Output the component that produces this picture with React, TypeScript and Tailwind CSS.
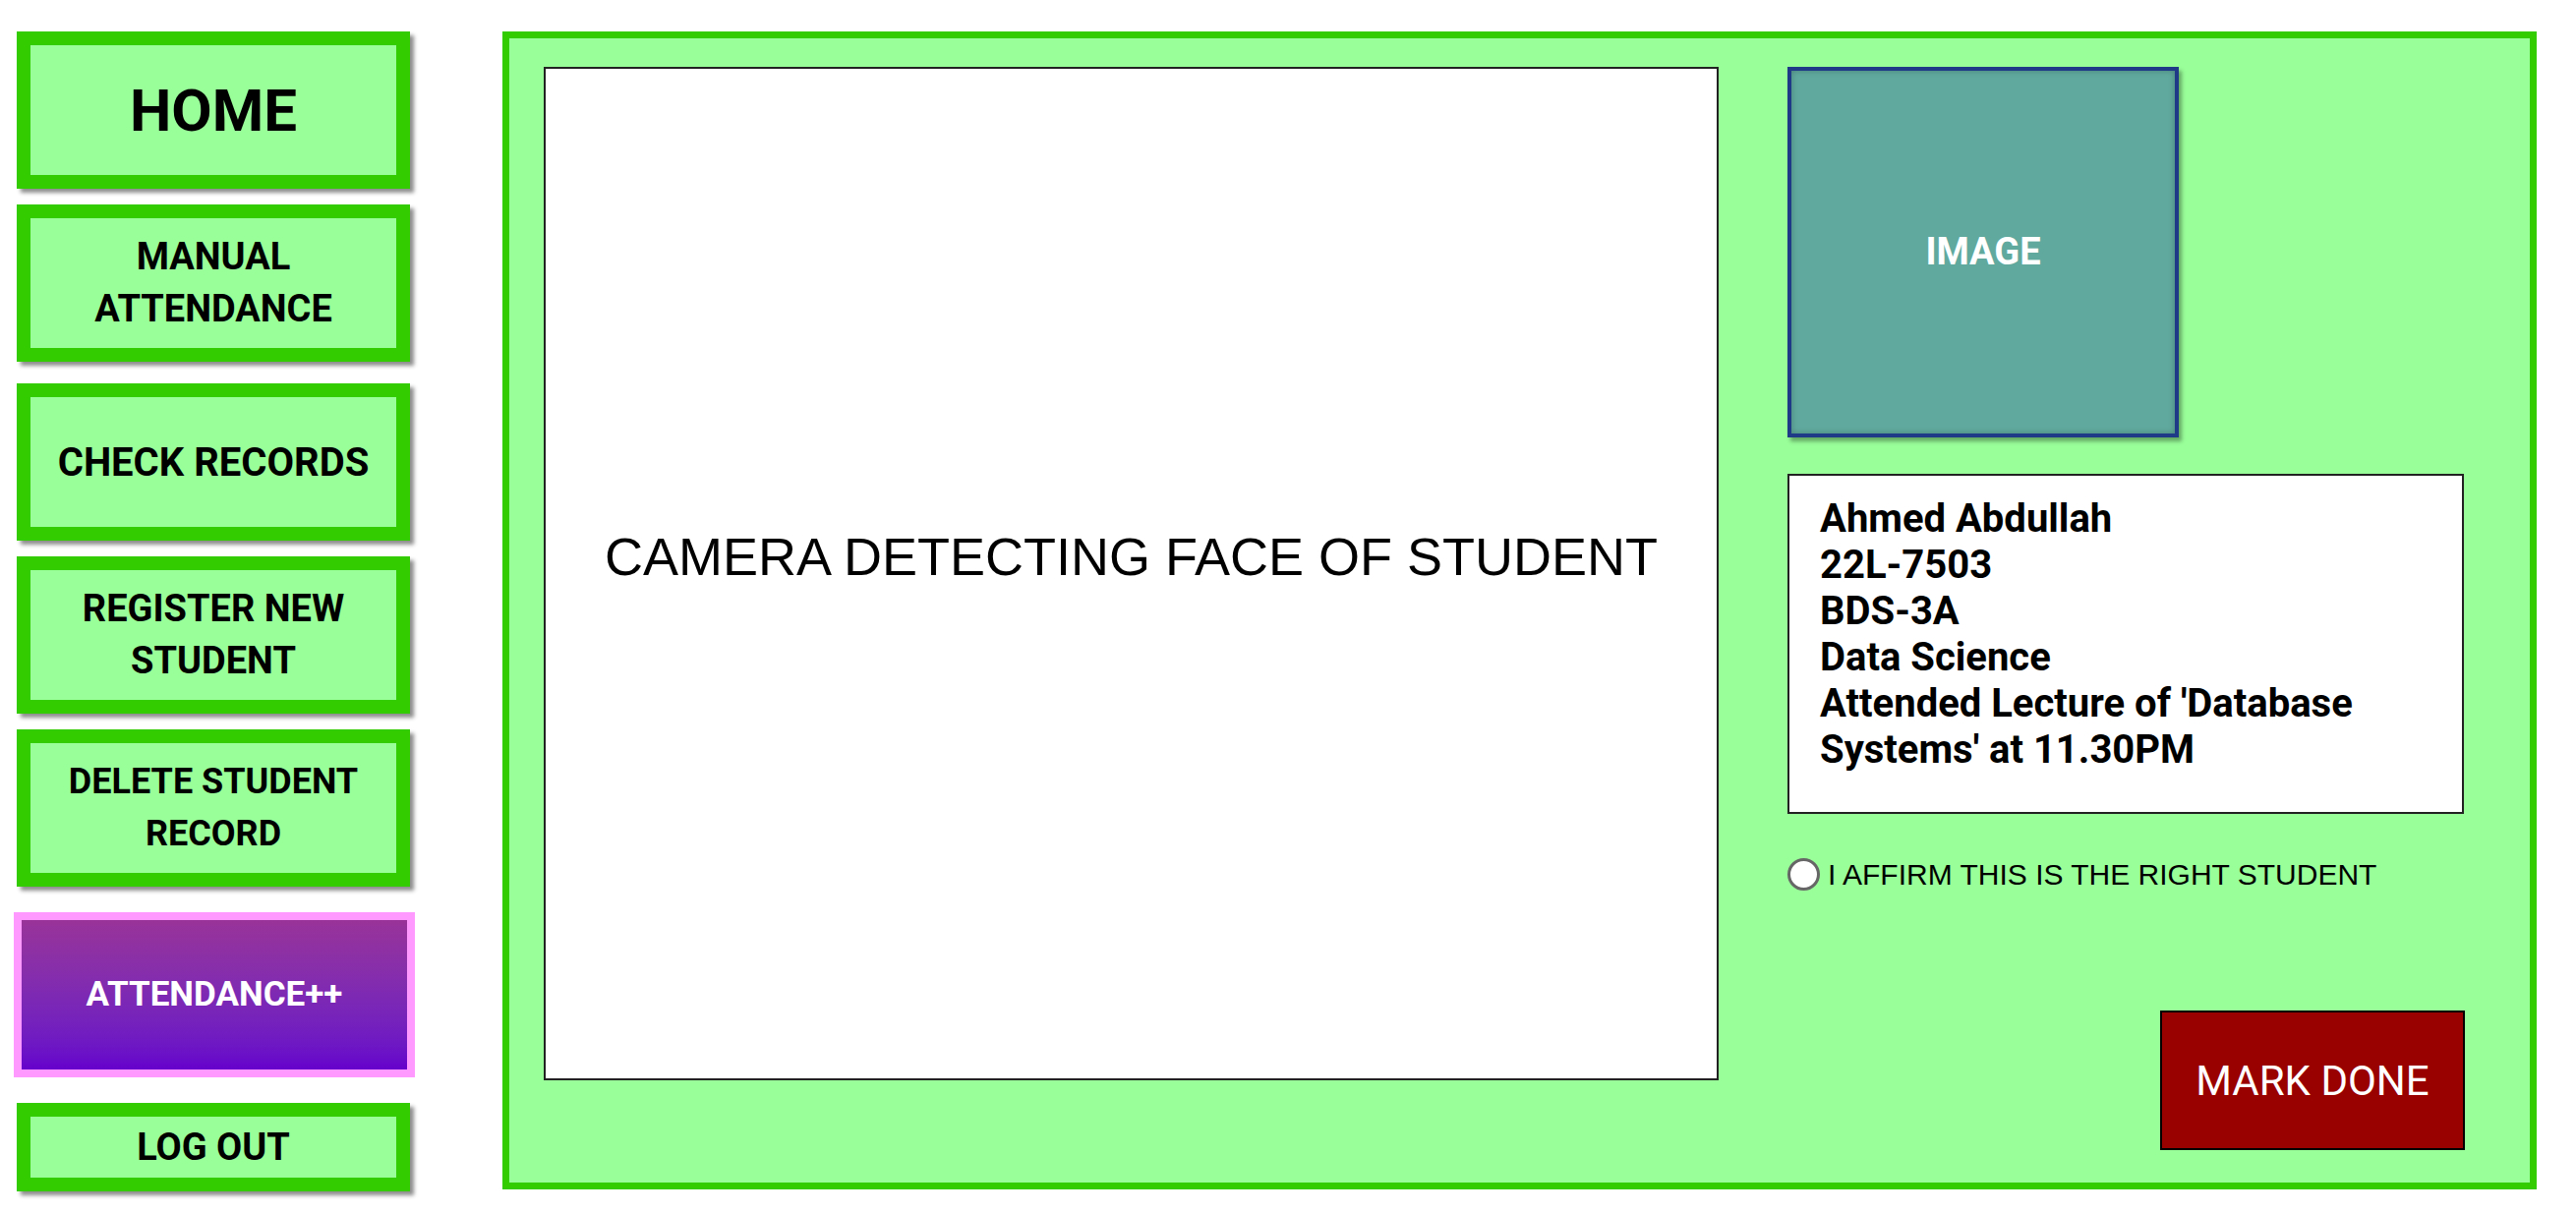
const NAV = [
  { label: ['HOME'], size: 'text-[60px]', h: 'h-[160px]', mt: 'mt-0' },
  { label: ['MANUAL', 'ATTENDANCE'], size: 'text-[38px]', h: 'h-[160px]', mt: 'mt-[16px]' },
  { label: ['CHECK RECORDS'], size: 'text-[40px]', h: 'h-[160px]', mt: 'mt-[22px]' },
  { label: ['REGISTER NEW', 'STUDENT'], size: 'text-[38px]', h: 'h-[160px]', mt: 'mt-[16px]' },
  { label: ['DELETE STUDENT', 'RECORD'], size: 'text-[36px]', h: 'h-[160px]', mt: 'mt-[16px]' },
];

function NavButton({ label, size, h, mt }: { label: string[]; size: string; h: string; mt: string }) {
  return (
    <div
      className={`flex w-[400px] flex-col items-center justify-center border-[14px] border-[#33cc00] bg-[#99ff99] text-center font-bold leading-[53px] text-black shadow-[4px_4px_4px_rgba(0,0,0,0.45)] ${size} ${h} ${mt}`}
    >
      {label.map((line) => (
        <span key={line}>{line}</span>
      ))}
    </div>
  );
}

export default function App() {
  return (
    <div className="flex h-[1234px] w-[2620px] overflow-hidden bg-white font-['Roboto',sans-serif]">
      {/* sidebar */}
      <aside className="flex w-[417px] shrink-0 flex-col pl-[17px] pt-[32px]">
        {NAV.map((item) => (
          <NavButton key={item.label.join(' ')} {...item} />
        ))}
        <div className="-ml-[3px] mt-[26px] flex h-[168px] w-[408px] items-center justify-center border-[8px] border-[#ff99ff] bg-gradient-to-b from-[#993399] to-[#6600cc] text-[35px] font-bold text-white">
          ATTENDANCE++
        </div>
        <div className="mt-[26px] flex h-[90px] w-[400px] items-center justify-center border-[14px] border-[#33cc00] bg-[#99ff99] text-[38px] font-bold text-black shadow-[4px_4px_4px_rgba(0,0,0,0.45)]">
          LOG OUT
        </div>
      </aside>

      {/* main panel */}
      <main className="ml-[94px] mt-[32px] flex h-[1178px] w-[2069px] border-[7px] border-[#33cc00] bg-[#99ff99] pl-[35px] pt-[29px]">
        <div className="flex h-[1031px] w-[1195px] items-center justify-center border-2 border-[#222] bg-white pb-[34px] font-['Liberation_Sans',Arial,sans-serif] text-[54px] text-black">
          CAMERA DETECTING FACE OF STUDENT
        </div>

        <div className="ml-[70px] flex w-[689px] flex-col">
          <div className="flex h-[377px] w-[398px] items-center justify-center border-[4px] border-[#1f3a86] bg-[#60a99e] text-[38px] font-bold text-white shadow-[3px_4px_4px_rgba(0,0,0,0.35),inset_0_0_6px_rgba(0,0,0,0.25)]">
            IMAGE
          </div>

          <div className="mt-[37px] flex h-[346px] w-[688px] flex-col border-2 border-[#222] bg-white pl-[31px] pt-[20px] text-[40px] font-bold leading-[47px] text-black">
            <span>Ahmed Abdullah</span>
            <span>22L-7503</span>
            <span>BDS-3A</span>
            <span>Data Science</span>
            <span>Attended Lecture of &apos;Database</span>
            <span>Systems&apos; at 11.30PM</span>
          </div>

          <label className="mt-[39px] flex items-center gap-[8px] font-['Liberation_Sans',Arial,sans-serif] text-[30px] text-black">
            <span className="h-[33px] w-[33px] rounded-full border-[3px] border-[#666] bg-white" />
            I AFFIRM THIS IS THE RIGHT STUDENT
          </label>

          <button
            type="button"
            className="mt-[116px] flex h-[142px] w-[310px] items-center justify-center self-end border-2 border-black bg-[#990000] text-[42px] text-white"
          >
            MARK DONE
          </button>
        </div>
      </main>
    </div>
  );
}
